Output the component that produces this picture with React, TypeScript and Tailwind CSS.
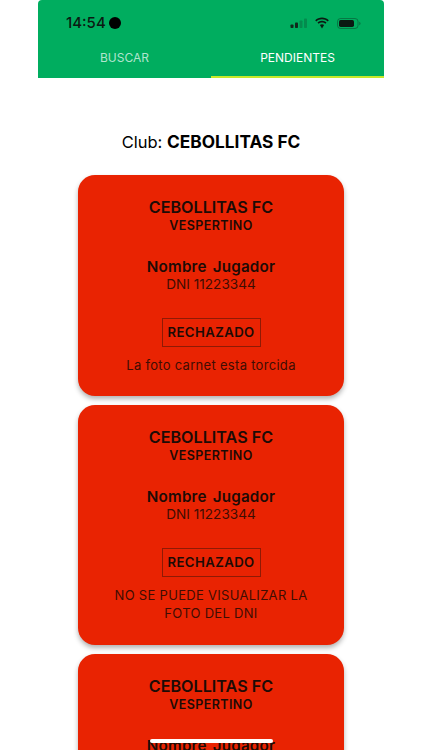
import React from 'react';

const font = { fontFamily: 'Inter, "Liberation Sans", sans-serif' };

function StatusIcons() {
  return (
    <div className="flex items-center gap-[5px]">
      <svg width="18" height="10" viewBox="0 0 18 10">
        <rect x="0.5" y="6.5" width="3" height="3.5" rx="0.8" fill="#10291b" />
        <rect x="5" y="4.5" width="3" height="5.5" rx="0.8" fill="#10291b" />
        <rect x="9.5" y="2.5" width="3" height="7.5" rx="0.8" fill="#10291b" fillOpacity="0.25" />
        <rect x="14" y="0.5" width="3" height="9.5" rx="0.8" fill="#10291b" fillOpacity="0.25" />
      </svg>
      <svg width="16" height="12" viewBox="0 0 16 12" className="ml-[1px]">
        <path d="M8 2.2c2.2 0 4.200.8 5.700 2.200l1.100-1.200C13 1.500 10.600.5 8 .5S3 1.500 1.200 3.200l1.100 1.200C3.800 3 5.800 2.200 8 2.200z" fill="#0b1a12" />
        <path d="M8 5.500c1.300 0 2.500.5 3.400 1.300l1.100-1.200C11.300 4.500 9.700 3.800 8 3.800s-3.300.7-4.500 1.800l1.100 1.200C5.500 6 6.700 5.500 8 5.500z" fill="#0b1a12" />
        <path d="M8 7.200c-.8 0-1.500.3-2.100.8L8 11.500 10.100 8c-.6-.5-1.300-.8-2.100-.8z" fill="#0b1a12" />
      </svg>
      <svg width="24" height="11" viewBox="0 0 24 11" className="ml-[2px]">
        <rect x="0.5" y="0.500" width="20.500" height="10" rx="3" fill="none" stroke="#10291b" strokeOpacity="0.4" />
        <rect x="2" y="2" width="15" height="7" rx="1.700" fill="#0b1a12" />
        <path d="M22.300 3.800c.8.300 1.200 1 1.200 1.700s-.4 1.400-1.200 1.700z" fill="#10291b" fillOpacity="0.45" />
      </svg>
    </div>
  );
}

function PlayerCard({ reason, className }: { reason: React.ReactNode; className: string }) {
  return (
    <div className={`w-[266px] shrink-0 rounded-[17px] bg-[#e92302] shadow-[0_3px_5px_rgba(0,0,0,0.3)] flex flex-col items-center text-center text-[#1d0b06] ${className}`}>
      <div className="mt-[21px] text-[16.200px] leading-[22px] font-semibold">CEBOLLITAS FC</div>
      <div className="mt-[-1px] text-[12.500px] leading-[18px] font-semibold tracking-[0.4px]">VESPERTINO</div>
      <div className="mt-[22px] text-[15.200px] leading-[20px] font-semibold tracking-[0.2px] [word-spacing:2px]">Nombre Jugador</div>
      <div className="mt-[-2px] text-[13.600px] leading-[18px] text-[#3f0d03]">DNI 11223344</div>
      <div className="mt-[25px] h-[29px] w-[99px] border border-[#8f1a05] flex items-center justify-center text-[13.200px] font-semibold tracking-[0.4px]">
        RECHAZADO
      </div>
      <div className="mt-[9px] w-[220px] text-[13px] leading-[18px] tracking-[0.3px] text-[#3f0d03]">{reason}</div>
    </div>
  );
}

export default function App() {
  return (
    <div className="relative h-[750px] w-[422px] overflow-hidden bg-white" style={font}>
      <header className="mx-[38px] h-[78px] w-[346px] rounded-t-[4px] bg-[#00ad5f]">
        <div className="flex h-[44px] items-center justify-between pl-[28px] pr-[23px] pt-[2px]">
          <div className="flex items-center gap-[3px] text-[15px] font-medium text-[#0b1a12]">
            14:54
            <span className="h-[12px] w-[12px] shrink-0 rounded-full bg-black" />
          </div>
          <StatusIcons />
        </div>
        <div className="flex h-[34px]">
          <div className="flex w-[173px] items-start justify-center pt-[5px] text-[12px] text-white/70">BUSCAR</div>
          <div className="flex w-[173px] items-start justify-center border-b-2 border-[#c6e92a] pt-[5px] text-[12px] text-white">PENDIENTES</div>
        </div>
      </header>

      <div className="mt-[52px] mb-[21px] text-center text-[16.500px] leading-[24px] text-black">
        Club: <span className="text-[17.300px] font-bold">CEBOLLITAS FC</span>
      </div>

      <div className="flex flex-col items-center gap-[9px]">
        <PlayerCard reason="La foto carnet esta torcida" className="h-[221px]" />
        <PlayerCard reason={<>NO SE PUEDE VISUALIZAR LA FOTO DEL DNI</>} className="h-[240px]" />
        <PlayerCard reason="" className="h-[221px]" />
      </div>

      <div className="absolute left-[150px] top-[739px] h-[4px] w-[123px] rounded-full bg-white" />
    </div>
  );
}
